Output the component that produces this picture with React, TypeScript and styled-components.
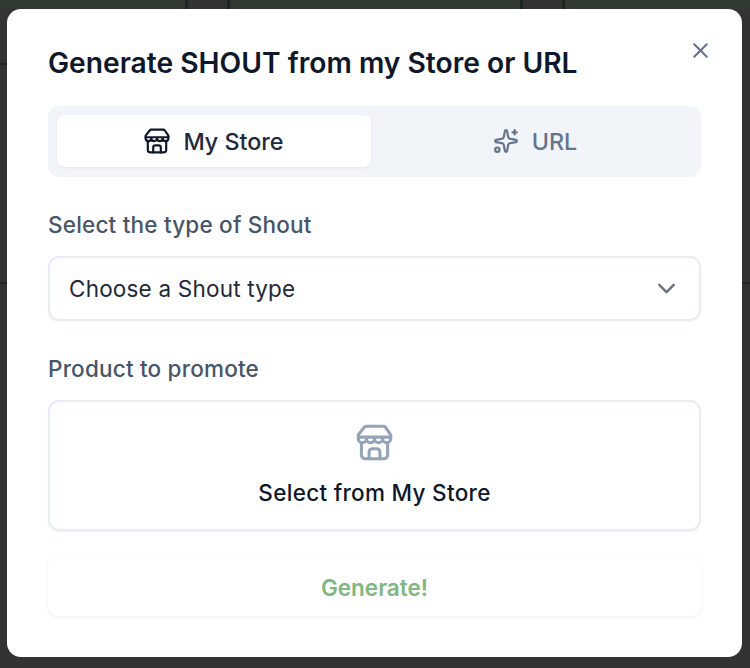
import React from "react";
import styled, { createGlobalStyle } from "styled-components";
import { Sparkles, X, ChevronDown } from "lucide-react";

const Global = createGlobalStyle`
  html, body { margin: 0; padding: 0; background: #333333; }
  * { box-sizing: border-box; }
`;

const Page = styled.div`
  width: 750px;
  height: 668px;
  overflow: hidden;
  padding: 9px 8px 11px 7px;
  font-family: Inter, "Liberation Sans", sans-serif;
  background-color: #333333;
  background-repeat: no-repeat;
  background-image:
    linear-gradient(#1d261f, #1d261f),
    linear-gradient(#1d261f, #1d261f),
    linear-gradient(#1d261f, #1d261f),
    linear-gradient(#1d261f, #1d261f),
    linear-gradient(#323a33, #323a33),
    linear-gradient(#323a33, #323a33),
    linear-gradient(#323a33, #323a33),
    linear-gradient(#1f2722, #1f2722),
    linear-gradient(#1f2722, #1f2722),
    linear-gradient(#1f2722, #1f2722);
  background-size:
    3px 9px, 3px 9px, 3px 9px, 3px 9px,
    185px 9px, 288px 9px, 184px 9px,
    7px 2px, 7px 2px, 8px 2px;
  background-position:
    185px 0, 227px 0, 520px 0, 562px 0,
    0 0, 232px 0, 566px 0,
    0 63px, 0 282px, 742px 282px;
`;

const Modal = styled.div`
  position: relative;
  height: 648px;
  background: #ffffff;
  border-radius: 14px;
  padding: 36px 41px 0 41px;
  display: flex;
  flex-direction: column;
`;

const Title = styled.h1`
  margin: 0;
  height: 36px;
  font-size: 28.2px;
  line-height: 36px;
  font-weight: 600;
  color: #0f172a;
  white-space: nowrap;
`;

const Close = styled.button`
  position: absolute;
  top: 27px;
  right: 28px;
  width: 28px;
  height: 28px;
  border: 0;
  padding: 0;
  background: none;
  color: #64748b;
  display: flex;
  align-items: center;
  justify-content: center;
`;

const Tabs = styled.div`
  margin-top: 25px;
  height: 71px;
  padding: 9px;
  border-radius: 11px;
  background: #f1f5f9;
  display: grid;
  grid-template-columns: 1fr 1fr;
  gap: 7px;
`;

const Tab = styled.div<{ $active?: boolean }>`
  height: 52px;
  border-radius: 8px;
  background: ${(p) => (p.$active ? "#ffffff" : "transparent")};
  box-shadow: ${(p) => (p.$active ? "0 1px 3px rgba(15,23,42,0.06)" : "none")};
  color: ${(p) => (p.$active ? "#1e293b" : "#64748b")};
  display: flex;
  align-items: center;
  justify-content: center;
  gap: 13px;
  font-size: 23.3px;
  font-weight: 500;
`;

const Label = styled.div`
  margin-top: 34px;
  height: 28px;
  line-height: 28px;
  font-size: 22.5px;
  font-weight: 500;
  letter-spacing: 0.2px;
  color: #475569;
  white-space: nowrap;
`;

const SelectBox = styled.div`
  margin-top: 17px;
  height: 65px;
  border: 2px solid #e6ebf5;
  border-radius: 11px;
  padding: 0 18px 0 19px;
  display: flex;
  align-items: center;
  justify-content: space-between;
  font-size: 22.5px;
  letter-spacing: 0.2px;
  color: #1e293b;
  box-shadow: 0 1px 2px rgba(15, 23, 42, 0.04);
`;

const Picker = styled.div`
  margin-top: 17px;
  height: 131px;
  border: 2px solid #e6ebf5;
  border-radius: 11px;
  display: flex;
  flex-direction: column;
  align-items: center;
  padding-top: 22px;
  gap: 18px;
  font-size: 22.5px;
  font-weight: 500;
  letter-spacing: 0.3px;
  color: #0f172a;
  box-shadow: 0 1px 2px rgba(15, 23, 42, 0.06);
`;

const Generate = styled.div`
  margin-top: 25px;
  height: 60px;
  padding-top: 2px;
  border-radius: 11px;
  background: #ffffff;
  box-shadow: 0 1px 4px rgba(15, 23, 42, 0.07);
  display: flex;
  align-items: center;
  justify-content: center;
  font-size: 22.5px;
  font-weight: 600;
  color: #7fb77e;
`;

const StoreIcon = ({ size, color, width = 2 }: { size: number; color: string; width?: number }) => (
  <svg width={size} height={size} viewBox="0 0 24 24" fill="none" stroke={color} strokeWidth={width} strokeLinecap="round" strokeLinejoin="round">
    <path d="M6.3 1.5h11.4a2 2 0 0 1 1.6.8L22.5 7v2.5a2.6 2.6 0 0 1-5.25 0a2.6 2.6 0 0 1-5.25 0a2.6 2.6 0 0 1-5.25 0a2.6 2.6 0 0 1-5.25 0V7l3.7-4.7a2 2 0 0 1 1.6-.8z" />
    <path d="M1.5 8.5h21" />
    <path d="M3.5 12.5V20A2.5 2.5 0 0 0 6 22.5h12a2.5 2.5 0 0 0 2.5-2.5v-7.5" />
    <path d="M8.5 22.5V18a2 2 0 0 1 2-2h3a2 2 0 0 1 2 2v4.5" />
  </svg>
);

export default function App() {
  return (
    <Page>
      <Global />
      <Modal>
        <Title>Generate SHOUT from my Store or URL</Title>
        <Close>
          <X size={25} strokeWidth={2} />
        </Close>
        <Tabs>
          <Tab $active>
            <StoreIcon size={26} color="#0f172a" />
            My Store
          </Tab>
          <Tab>
            <Sparkles size={26} strokeWidth={2} />
            URL
          </Tab>
        </Tabs>
        <Label>Select the type of Shout</Label>
        <SelectBox>
          Choose a Shout type
          <ChevronDown size={29} color="#6b7280" strokeWidth={2} />
        </SelectBox>
        <Label>Product to promote</Label>
        <Picker>
          <StoreIcon size={37} color="#94a3b8" />
          Select from My Store
        </Picker>
        <Generate>Generate!</Generate>
      </Modal>
    </Page>
  );
}
